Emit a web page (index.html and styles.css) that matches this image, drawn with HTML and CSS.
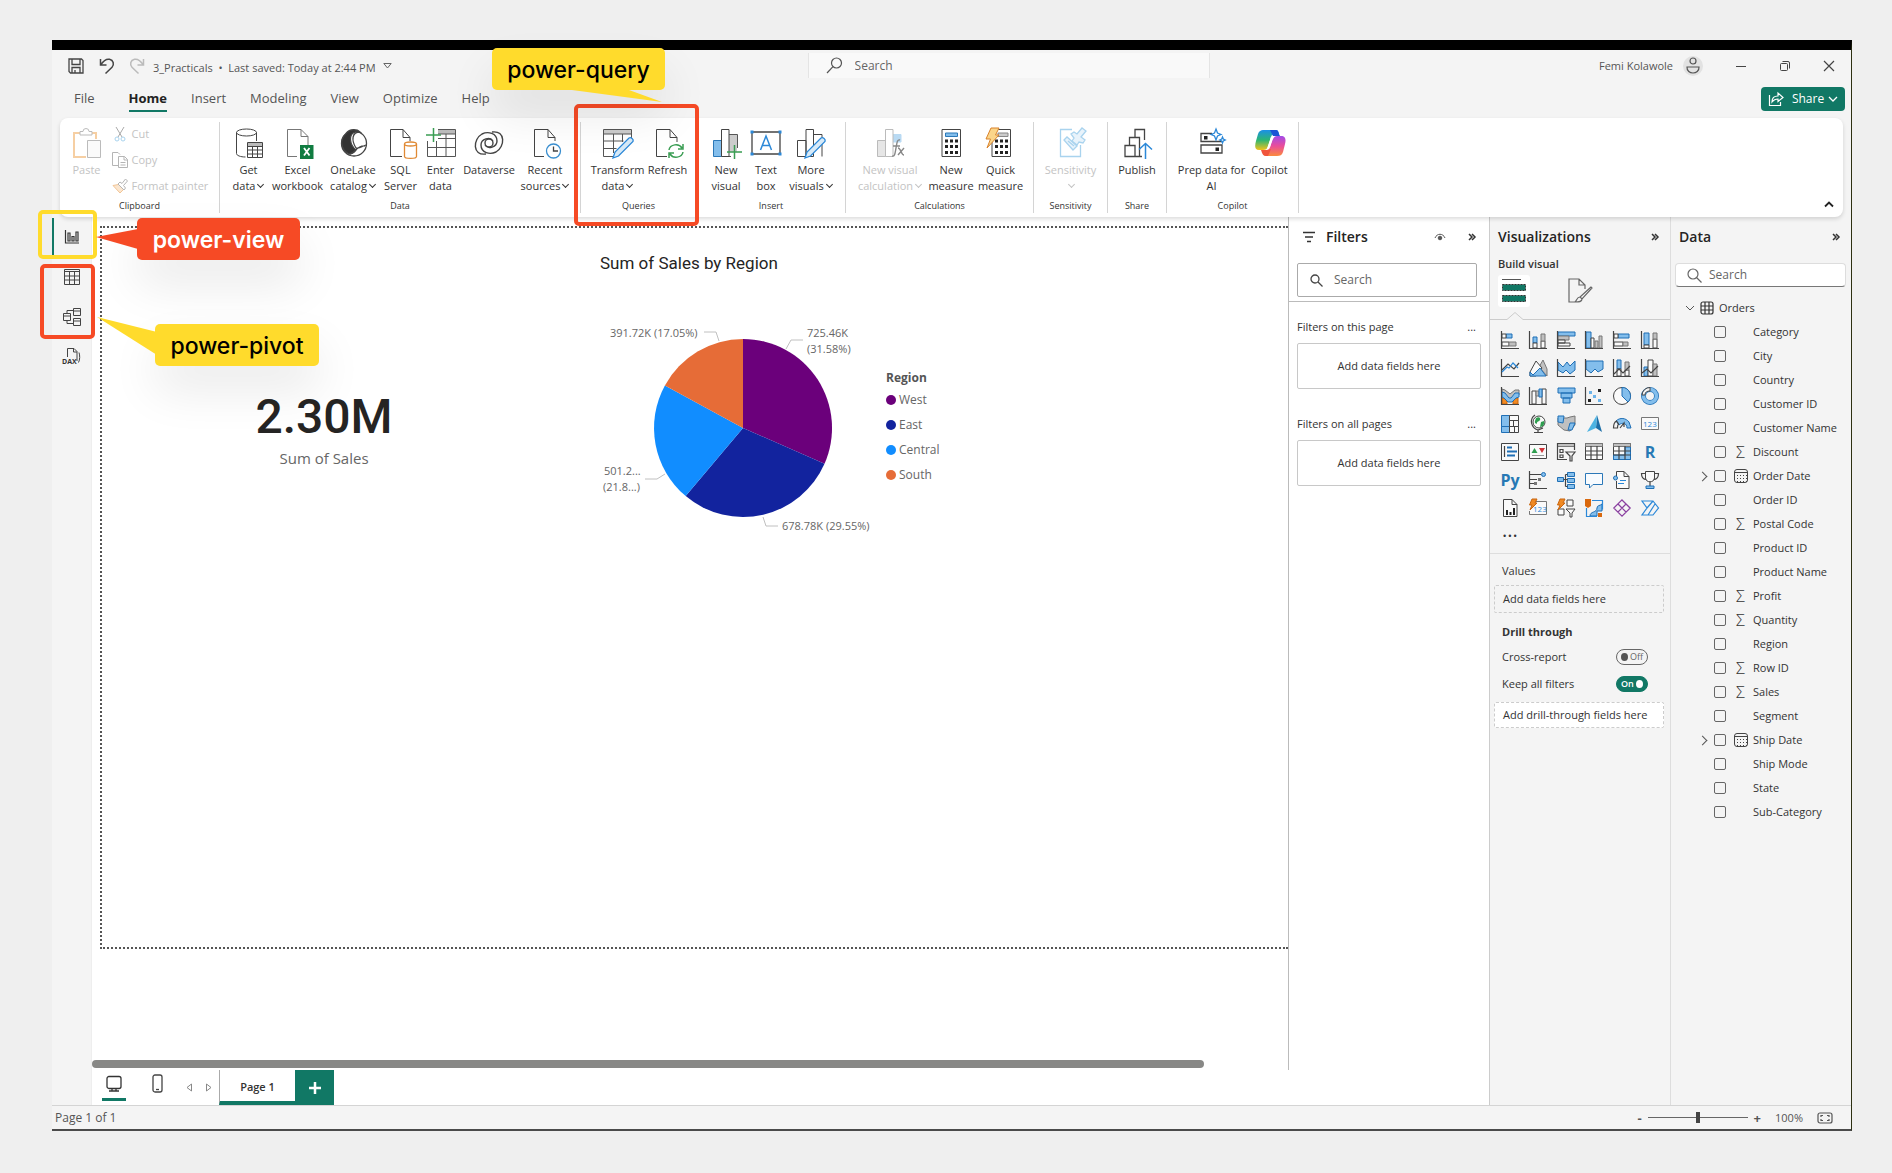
FILE: index.html
```html
<!DOCTYPE html>
<html lang="en">
<head>
<meta charset="utf-8">
<title>3_Practicals - Power BI Desktop</title>
<link rel="stylesheet" href="styles.css">
</head>
<body>
<div class="app">
  <header class="titlebar">
    <div class="quick">
      <button class="plain" aria-label="Save"><svg width="18" height="18" viewBox="0 0 18 18" fill="none" stroke="#444" stroke-width="1.3"><path d="M2 2h12.500L16 3.500V16H3.500L2 14.500zM5 2v5.500h8V2M5 16v-5.500h8V16M8 13v3"/></svg></button>
      <button class="plain" aria-label="Undo"><svg width="16" height="18" viewBox="0 0 16 18" fill="none" stroke="#444" stroke-width="1.500"><path d="M1.500 2v6h6M1.800 7.700C4 4.500 7 1.500 10.500 2.300c4 1 5 5 2.500 8L6.500 16.500"/></svg></button>
      <button class="plain" aria-label="Redo" disabled><svg width="16" height="18" viewBox="0 0 16 18" fill="none" stroke="#bbb" stroke-width="1.500"><path d="M14.500 2v6h-6M14.200 7.700C12 4.500 9 1.500 5.500 2.300c-4 1-5 5-2.500 8l6.500 6.200"/></svg></button>
      <span class="filename">3_Practicals&nbsp; •&nbsp; Last saved: Today at 2:44 PM</span>
      <svg class="caret" width="9" height="6" viewBox="0 0 9 6" fill="none" stroke="#666"><path d="M.8.500h7.400L4.500 5z"/></svg>
    </div>
    <label class="topsearch">
      <svg width="17" height="17" viewBox="0 0 17 17" fill="none" stroke="#555" stroke-width="1.200"><circle cx="10.500" cy="6" r="5"/><path d="M7 9.700 1 16"/></svg>
      <input type="text" placeholder="Search" aria-label="Search">
    </label>
    <div class="window">
      <span>Femi Kolawole</span>
      <svg class="avatar" width="20" height="20" viewBox="0 0 20 20" fill="none" stroke="#555" stroke-width="1.200"><circle cx="10" cy="10" r="10" fill="#e2e2e2" stroke="none"/><circle cx="10" cy="5" r="3"/><path d="M4 11h12c.500 8-12.500 8-12 0z"/></svg>
      <button class="plain" aria-label="Minimize"><svg width="12" height="12" viewBox="0 0 12 12" stroke="#444"><path d="M1 6.500h10"/></svg></button>
      <button class="plain" aria-label="Restore"><svg width="12" height="12" viewBox="0 0 12 12" fill="none" stroke="#444"><rect x="1.500" y="3.500" width="7" height="7" rx="1"/><path d="M3.500 1.500H9a1.500 1.500 0 0 1 1.500 1.500v5.500"/></svg></button>
      <button class="plain" aria-label="Close"><svg width="12" height="12" viewBox="0 0 12 12" stroke="#444" stroke-width="1.200"><path d="m1 1 10 10M11 1 1 11"/></svg></button>
    </div>
  </header>

  <nav class="menu">
    <button class="tab">File</button>
    <button class="tab active">Home</button>
    <button class="tab">Insert</button>
    <button class="tab">Modeling</button>
    <button class="tab">View</button>
    <button class="tab">Optimize</button>
    <button class="tab">Help</button>
    <button class="share"><svg width="16" height="16" viewBox="0 0 16 16" fill="none" stroke="#fff" stroke-width="1.200"><path d="M1.500 4v10.500h11V11M4 11c0-4 2-6 6-6V2l5 4.500-5 4V8C7 8 5.500 9 4 11z"/></svg>Share<svg width="10" height="7" viewBox="0 0 10 7" fill="none" stroke="#fff" stroke-width="1.300"><path d="m1 1 4 4 4-4"/></svg></button>
  </nav>

  <section class="ribbon">
    <div class="group clipboard">
      <div class="tools">
        <button class="tool off"><svg width="30" height="30" viewBox="0 0 30 30" fill="none"><path d="M8 5H2v24h12M20 5h4v6" stroke="#f6cfa3" stroke-width="2"/><path d="M8 7V3.500h3a3 3 0 0 1 6 0h3V7z" stroke="#bbb"/><path d="M15.500 12.500h13v17h-13z" fill="#fafafa" stroke="#bbb"/></svg>Paste</button>
        <div class="stack">
          <button class="mini"><svg width="16" height="16" viewBox="0 0 16 16" fill="none" stroke="#aaa"><path d="M4 1l6 10M12 1 6 11"/><circle cx="5" cy="13" r="2" stroke="#a9d3ee"/><circle cx="11" cy="13" r="2" stroke="#a9d3ee"/></svg>Cut</button>
          <button class="mini"><svg width="16" height="16" viewBox="0 0 16 16" fill="none" stroke="#b5b5b5"><path d="M6 13.500H.500V.500H6l2 2M6.500 4.500h6l3 3v8h-9zM12 4.500V8h3.500M8.500 10.500h5M8.500 13h5"/></svg>Copy</button>
          <button class="mini"><svg width="16" height="16" viewBox="0 0 16 16" fill="none" stroke="#b5b5b5"><path d="M1 7.500 8 15l3.500-3.500-5-5z" fill="#fbe6cf" stroke="#f2c596"/><path d="m6 6 6 6 1.500-2-2-2.500L15.500 3 13.500 1 10 5.500 8 4z"/></svg>Format painter</button>
        </div>
      </div>
      <h2>Clipboard</h2>
    </div>
    <div class="group data">
      <div class="tools">
        <button class="tool"><svg width="30" height="30" viewBox="0 0 30 30" fill="none" stroke="#444"><path d="M2.500 4.500v21c0 2 4 3.500 9 3.500M22.500 4.500V13"/><ellipse cx="12.500" cy="4.500" rx="10" ry="3.500"/><path d="M13.500 14.500h15v15h-15z" fill="#fff"/><path d="M14 15h14v3H14z" fill="#bbb" stroke="none"/><path d="M13.500 18.500h15M13.500 22h15M13.500 26h15M18.500 18.500v11M23.500 18.500v11"/></svg>Get<span>data<i class="chev"></i></span></button>
        <button class="tool"><svg width="30" height="30" viewBox="0 0 30 30" fill="none" stroke="#777"><path d="M14 28.500H4.500v-27H18l7 7V17M18 1.500v7h7" /><path d="M17 17h13.500v14H17z" fill="#107c41" stroke="none"/><path d="m21 20 5.500 7.500M26.500 20 21 27.500" stroke="#fff" stroke-width="1.800"/></svg>Excel<span>workbook</span></button>
        <button class="tool"><svg width="30" height="30" viewBox="0 0 30 30" fill="none" stroke="#444" stroke-width="1.300"><circle cx="16" cy="15.500" r="12.500"/><path d="M8 5.500C12 .500 19 1 22 4c-5-1-10 1-9.500 8 .500 5 3 8 5.500 10-2 3-5 4-7 4C3 22 1 12 8 5.500z" fill="#333"/><path d="M22 4c-8 0-9 8-4 16 3 1 7-2 10-3M12 26c5-1 7-9 15-8" /></svg>OneLake<span>catalog<i class="chev"></i></span></button>
        <button class="tool"><svg width="30" height="30" viewBox="0 0 30 30" fill="none" stroke="#444"><path d="M16 28.500H4.500v-27H17l7 8V13M17 1.500v8h7"/><path d="M18.500 16v12.500c0 2.500 12 2.500 12 0V16" fill="#fff" stroke="#e08a35" stroke-width="1.300"/><ellipse cx="24.500" cy="16" rx="6" ry="2" fill="#fff" stroke="#e08a35" stroke-width="1.300"/></svg>SQL<span>Server</span></button>
        <button class="tool"><svg width="30" height="30" viewBox="0 0 30 30" fill="none" stroke="#555"><path d="M12 2h17v4H12z" fill="#bbb" stroke="none"/><path d="M12 1.500h17.500v27h-28V13M1.500 19.500h28M12 10.500h17.500M10.500 13v15.500M20 6v22.500M12 6h17.500"/><path d="M7.500 0v14M0 7h15" stroke="#3a9d53" stroke-width="1.500"/></svg>Enter<span>data</span></button>
        <button class="tool"><svg width="30" height="30" viewBox="0 0 30 30" fill="none" stroke="#444" stroke-width="1.400"><path d="M12 26C-2 28-1 11 8 6c6-3 15-1 15 7 0 6-9 9-12 4"/><path d="M18 4c14-2 13 15 4 20-6 3-15 1-15-7 0-6 9-9 12-4"/><circle cx="15" cy="15" r="4"/></svg>Dataverse</button>
        <button class="tool"><svg width="30" height="30" viewBox="0 0 30 30" fill="none" stroke="#444"><path d="M14 28.500H4.500v-27H18l7 8V13M18 1.500v8h7"/><circle cx="23.500" cy="23" r="7" fill="#fff" stroke="#3a8fd0" stroke-width="1.300"/><path d="M23.500 18.500V23H28" stroke-width="1.300"/></svg>Recent<span>sources<i class="chev"></i></span></button>
      </div>
      <h2>Data</h2>
    </div>
    <div class="group queries">
      <div class="tools">
        <button class="tool"><svg width="30" height="30" viewBox="0 0 30 30" fill="none" stroke="#555"><path d="M1 2h27v4H1z" fill="#ccc" stroke="none"/><path d="M10 28.500H.500v-27h28V10M.500 6h28M.500 13h20M.500 20.500h13M10.500 6v19M19.500 6v8"/><path d="m10 30 2-6 14-14c2-1 5 1 4 3.500L15.500 28z" fill="#d7eaf8" stroke="#2b88d8" stroke-width="1.300"/></svg>Transform<span>data<i class="chev"></i></span></button>
        <button class="tool"><svg width="30" height="30" viewBox="0 0 30 30" fill="none" stroke="#444"><path d="M14 28.500H3.500v-27H17l7 8V14M17 1.500v8h7"/><path d="M16 22c1-6 10-7 13-2M30 16v5h-5M30 24c-1 6-10 7-13 2M16 30v-5h5" stroke="#3a9d53" stroke-width="1.500"/></svg>Refresh</button>
      </div>
      <h2>Queries</h2>
    </div>
    <div class="group insert">
      <div class="tools">
        <button class="tool"><svg width="30" height="30" viewBox="0 0 30 30" fill="none" stroke="#555"><path d="M18 6.500h8.500V20M18 28.500h2" fill="#ccc"/><path d="M18 7h8v17h-8z" fill="#ccc" stroke="none"/><path d="M2.500 12.500h8v16h-8z" fill="#83beec" stroke="#2b78b8"/><path d="M10.500 1.500H18v27h-7.500z" fill="#fff" stroke="#444"/><path d="M23.500 17v14M16 24h15" stroke="#3a9d53" stroke-width="1.500"/></svg>New<span>visual</span></button>
        <button class="tool"><svg width="32" height="30" viewBox="0 0 32 30" fill="none"><path d="M2 4h28v22H2z" stroke="#444" stroke-width="1.300"/><path d="M.500 2.500h3v3h-3zM28.500 2.500h3v3h-3zM.500 24.500h3v3h-3zM28.500 24.500h3v3h-3z" fill="#2b88d8"/><path d="m10.500 22 5.500-14 5.500 14M12.500 17.500h7" stroke="#2b88d8" stroke-width="1.500"/></svg>Text<span>box</span></button>
        <button class="tool"><svg width="30" height="30" viewBox="0 0 30 30" fill="none" stroke="#444"><path d="M1.500 12.500H10v16H1.500zM10 1.500h7.500v27H10zM17.500 6.500H26v22"/><path d="m9 30 2-6 14-14c2-1 5 1 4 3.500L14.500 28z" fill="#d7eaf8" stroke="#2b88d8" stroke-width="1.300"/></svg>More<span>visuals<i class="chev"></i></span></button>
      </div>
      <h2>Insert</h2>
    </div>
    <div class="group calc">
      <div class="tools">
        <button class="tool off"><svg width="30" height="30" viewBox="0 0 30 30" fill="none" stroke="#bbb"><path d="M18 6.500h8V14h-8z" fill="#b9daf3" stroke="#b9daf3"/><path d="M2.500 12.500h8v16h-8z" fill="#e6e6e6"/><path d="M10.500 1.500H18v27h-7.500z" fill="#fff"/><path d="M25 12c-3-1-3 3-4 8s-1 9-4 8M18 18h7M23 20c3 0 3 7 6 7M29 20l-6 7" stroke="#888" stroke-width="1.400"/></svg>New visual<span>calculation<i class="chev"></i></span></button>
        <button class="tool"><svg width="30" height="30" viewBox="0 0 30 30"><path d="M6 1.500h18.500v27H6z" fill="#fff" stroke="#444"/><path d="M9.500 5h12v3.500h-12z" fill="#83beec" stroke="#2b78b8"/><path d="M9 13h13M9 18.500h13M9 24.500h13" stroke="#222" stroke-width="3" stroke-dasharray="3 2"/></svg>New<span>measure</span></button>
        <button class="tool"><svg width="30" height="30" viewBox="0 0 30 30"><path d="M6 1.500h18.500v27H6z" fill="#fff" stroke="#444"/><path d="M12 5h10v3.500H12z" fill="#ccc" stroke="#888"/><path d="M9 13h13M9 18.500h13M9 24.500h13" stroke="#222" stroke-width="3" stroke-dasharray="3 2"/><path d="M5 0h8L9.500 7H13L1 20l3.500-9H0z" fill="#fbd58a" stroke="#d9822b"/></svg>Quick<span>measure</span></button>
      </div>
      <h2>Calculations</h2>
    </div>
    <div class="group sens">
      <div class="tools">
        <button class="tool off"><svg width="30" height="30" viewBox="0 0 30 30" fill="none" stroke="#a9d3ee" stroke-width="1.300"><path d="M16 1.500H4.500v27h20V17"/><path d="m8 12 3-3 10 9-4 4z" fill="#e8f3fb"/><path d="m12 13 6 5"/><path d="m15 6 3-2 3 2 5-6 4 3-5 6 4 3-2 3-4-1-2 3-5-4 2-3z" fill="#e8f3fb"/></svg>Sensitivity<span><i class="chev"></i></span></button>
      </div>
      <h2>Sensitivity</h2>
    </div>
    <div class="group pub">
      <div class="tools">
        <button class="tool"><svg width="30" height="30" viewBox="0 0 30 30" fill="none" stroke="#444" stroke-width="1.300"><path d="M20 28.500H3v-11h10v11M7.500 17.500v-8h10V28M13 9.500v-8h9.500V12"/><path d="M23.500 31V16M17 21.500l6.500-6 6.500 6" stroke="#2b88d8" stroke-width="1.500"/></svg>Publish</button>
      </div>
      <h2>Share</h2>
    </div>
    <div class="group copilot">
      <div class="tools">
        <button class="tool"><svg width="30" height="30" viewBox="0 0 30 30" fill="none" stroke="#444" stroke-width="1.300"><path d="M15 5.500H4v8h21M4 17h21v8H4z"/><path d="M7 8h3.500v3.500H7zM18.500 19.500H22V23h-3.500z" fill="#222" stroke="none"/><path d="M19 1l1.500 4L24 6.500 20.500 8 19 12l-1.500-4L14 6.500 17.500 5zM25.500 9l.8 2 2 1-2 1-.8 2-.8-2-2-1 2-1z" fill="#fff" stroke="#2b88d8"/></svg>Prep data for<span>AI</span></button>
        <button class="tool"><svg width="32" height="30" viewBox="0 0 32 30"><defs><linearGradient id="ca" x1="0" y1="0" x2="0" y2="1"><stop offset="0" stop-color="#1b8fe8"/><stop offset=".500" stop-color="#2bb673"/><stop offset="1" stop-color="#f3c21b"/></linearGradient><linearGradient id="cb" x1="0" y1="0" x2="0" y2="1"><stop offset="0" stop-color="#a24be8"/><stop offset=".500" stop-color="#ea4d9a"/><stop offset="1" stop-color="#fb8a3c"/></linearGradient></defs><path d="M9 2h13c2 0 2.500 2 3 4h-5c-2 0-3 2-4 6l-2 6c-1 3-2 4-5 4H5c-5 0-4-5-3-9L4 6c1-3 3-4 5-4z" fill="url(#ca)"/><path d="M16 2h6c2 0 2.500 2 3 4l1 2h-7z" fill="#1a53d6"/><path d="M23 28H12c-3 0-3-3-4-6h5c2 0 3-2 4-6l2-5c1-2 2-3 4-3h4c5 0 5 4 4 8l-2 8c-1 3-3 4-6 4z" fill="url(#cb)"/><path d="M7 22h6l4-1-3 7h-2c-3 0-4-3-5-6z" fill="#f0553c"/><path d="m17 9-4 12c2-1 3-2 4-5l2-7z" fill="#fff"/></svg>Copilot</button>
      </div>
      <h2>Copilot</h2>
    </div>
    <button class="plain collapse" aria-label="Collapse ribbon"><svg width="10" height="7" viewBox="0 0 10 7" fill="none" stroke="#222" stroke-width="1.800"><path d="m1 5.500 4-4 4 4"/></svg></button>
  </section>

  <main class="work">
    <nav class="rail">
      <button class="view current" aria-label="Report view"><svg width="16" height="16" viewBox="0 0 16 16" fill="none" stroke="#333" stroke-width="1.200"><path d="M1.500 1v13H15M4 4h2v8H4zM8 7.500h2V12H8zM12 3h2v9h-2z"/></svg></button>
      <button class="view" aria-label="Table view"><svg width="18" height="18" viewBox="0 0 18 18" fill="none" stroke="#444"><path d="M1.500 1.500h15v15h-15zM1.500 3.500h15M1.500 8h15M1.500 12h15M6.500 4v12M11.500 4v12"/></svg></button>
      <button class="view" aria-label="Model view"><svg width="20" height="20" viewBox="0 0 20 20" fill="none" stroke="#444"><path d="M1.500 6.500h7v7h-7zM1.500 9h7M11.500 1.500h7v7h-7zM11.500 4h7M11.500 11.500h7v7h-7zM11.500 14h7M5 6V3.500h6.500M5 14v2.500h6.500"/></svg></button>
      <button class="view" aria-label="DAX query view"><svg width="20" height="20" viewBox="0 0 20 20" fill="none" stroke="#444"><path d="M5.500 10V1.500H12l3 3V14M11.500 1.500V5H15M17 5.500c1 3 1 7-.500 10"/><text x="0" y="17" font-size="7" font-weight="700" fill="#333" stroke="none">DAX</text></svg></button>
    </nav>

    <div class="center">
      <div class="upper">
        <div class="canvas">
          <div class="page">
            <figure class="card"><strong>2.30M</strong><figcaption>Sum of Sales</figcaption></figure>
            <figure class="pie">
              <figcaption>Sum of Sales by Region</figcaption>
              <div class="plot">
                <svg width="286" height="240" viewBox="0 0 286 240">
                  <g transform="translate(143 127)">
                    <path d="M0 0V-89A89 89 0 0 1 81.500 35.800z" fill="#6b007b"/>
                    <path d="M0 0 81.500 35.800A89 89 0 0 1-57.300 68.100z" fill="#12239e"/>
                    <path d="M0 0-57.300 68.100A89 89 0 0 1-78.100-42.600z" fill="#118dff"/>
                    <path d="M0 0-78.100-42.600A89 89 0 0 1 0-89z" fill="#e66c37"/>
                  </g>
                  <path d="M104 31h12l3 9M186 48l5-9h12M163 216l3 9h12M65 173l-8 5H45" fill="none" stroke="#c0c0c0"/>
                  <g class="slice-labels">
                    <text x="10" y="36">391.72K (17.05%)</text>
                    <text x="207" y="36">725.46K</text><text x="207" y="52">(31.58%)</text>
                    <text x="4" y="174">501.2...</text><text x="3" y="190">(21.8...)</text>
                    <text x="182" y="229">678.78K (29.55%)</text>
                  </g>
                </svg>
                <ul class="legend">
                  <li class="head">Region</li>
                  <li><i class="west"></i>West</li>
                  <li><i class="east"></i>East</li>
                  <li><i class="central"></i>Central</li>
                  <li><i class="south"></i>South</li>
                </ul>
              </div>
            </figure>
          </div>
          <div class="scroll"><div class="thumb"></div></div>
        </div>

        <aside class="filters">
          <div class="fhead">
            <svg width="14" height="12" viewBox="0 0 14 12" stroke="#333" stroke-width="1.300"><path d="M1 1.500h12M3 6h8M5 10.500h4"/></svg>
            <h3>Filters</h3>
            <button class="plain eye" aria-label="Show filters"><svg width="12" height="8" viewBox="0 0 12 8" fill="none" stroke="#555"><path d="M1 5c2-5 8-5 10 0"/><circle cx="6" cy="5" r="1.800" fill="#555"/></svg></button>
            <button class="plain" aria-label="Collapse"><svg width="8" height="8" viewBox="0 0 8 8" fill="none" stroke="#333" stroke-width="1.500"><path d="m1 1 3 3-3 3M4 1l3 3-3 3"/></svg></button>
          </div>
          <label class="fsearch"><svg width="13" height="13" viewBox="0 0 13 13" fill="none" stroke="#444" stroke-width="1.300"><circle cx="5" cy="5" r="4"/><path d="m8 8 4.500 4.500"/></svg><input type="text" placeholder="Search" aria-label="Search filters"></label>
          <section class="fgroup"><div class="frow"><span>Filters on this page</span><button class="plain">...</button></div><button class="well">Add data fields here</button></section>
          <section class="fgroup"><div class="frow"><span>Filters on all pages</span><button class="plain">...</button></div><button class="well">Add data fields here</button></section>
        </aside>
      </div>

      <footer class="pages">
        <button class="device on" aria-label="Desktop layout"><svg width="18" height="18" viewBox="0 0 18 18" fill="none" stroke="#333" stroke-width="1.300"><rect x="2" y="1.500" width="14" height="12" rx="2"/><path d="M4 16h10M7 14v2M11 14v2"/></svg></button>
        <button class="device" aria-label="Mobile layout"><svg width="12" height="20" viewBox="0 0 12 20" fill="none" stroke="#444" stroke-width="1.300"><rect x="1" y="1" width="9" height="17" rx="2"/><path d="M4 15.500h3"/></svg></button>
        <button class="plain" aria-label="Previous page"><svg width="6" height="9" viewBox="0 0 6 9" fill="none" stroke="#888"><path d="M5.500 1v7L1 4.500z"/></svg></button>
        <button class="plain next" aria-label="Next page"><svg width="6" height="9" viewBox="0 0 6 9" fill="none" stroke="#888"><path d="M.500 1v7L5 4.500z"/></svg></button>
        <button class="pagetab">Page 1</button>
        <button class="addpage" aria-label="New page"><svg width="12" height="12" viewBox="0 0 12 12" stroke="#fff" stroke-width="2.500"><path d="M6 0v12M0 6h12"/></svg></button>
      </footer>
    </div>

    <aside class="viz">
      <div class="phead"><h3>Visualizations</h3><button class="plain" aria-label="Collapse"><svg width="8" height="8" viewBox="0 0 8 8" fill="none" stroke="#333" stroke-width="1.500"><path d="m1 1 3 3-3 3M4 1l3 3-3 3"/></svg></button></div>
      <p class="build">Build visual</p>
      <div class="modes">
        <button class="mode on" aria-label="Build visual"><svg width="26" height="26" viewBox="0 0 26 26"><path d="M1 1.500h19" stroke="#555"/><path d="M1.500 6.500h23v6h-23zM1.500 17.500h23v6h-23z" fill="#117865" stroke="#333" stroke-dasharray="2 1"/></svg></button>
        <button class="mode" aria-label="Format visual"><svg width="26" height="26" viewBox="0 0 26 26" fill="none" stroke="#666" stroke-width="1.200"><path d="M9 24H2V1h10l6 6v4M12 1v6h6M24 9 13 19l2 2L25 10zM13 19c-3 0-3 3-5 5 4 0 7 0 7-3"/></svg></button>
      </div>
      <svg class="notch" width="180" height="8" viewBox="0 0 180 8" fill="none" stroke="#ccc"><path d="M0 7.500h17l8-7 8 7h147"/></svg>
      <div class="gallery">
        <button aria-label="Stacked bar"><svg viewBox="0 0 18 18"><path class="ax" d="M.500 0v17.500H18"/><path class="b" d="M5 3h6v4H5z"/><path class="w" d="M1 3h4v4H1zM1 11h7v4H1z"/><path class="g" d="M8 11h7v4H8z"/></svg></button>
        <button aria-label="Stacked column"><svg viewBox="0 0 18 18"><path class="ax" d="M.500 0v17.500H18"/><path class="b" d="M4 6h4v6H4z"/><path class="w" d="M4 12h4v5H4zM12 10h4v7h-4z"/><path class="g" d="M12 3h4v7h-4z"/></svg></button>
        <button aria-label="Clustered bar"><svg viewBox="0 0 18 18"><path class="b" d="M1 1h17v4H1z"/><path class="g" d="M1 5h11v4H1z"/><path class="w" d="M1 9h7v3H1zM1 12h12v3H1z"/><path class="ax" d="M.500 0v17.500H18"/></svg></button>
        <button aria-label="Clustered column"><svg viewBox="0 0 18 18"><path class="b" d="M1 1h5v16H1z"/><path class="w" d="M6 7h3v10H6z"/><path class="g" d="M10 10h3v7h-3zM14 5h3v12h-3z"/><path class="ax" d="M.500 0v17.500H18"/></svg></button>
        <button aria-label="100% stacked bar"><svg viewBox="0 0 18 18"><path class="b" d="M5 3h11v4H5z"/><path class="w" d="M1 3h4v4H1zM1 11h9v4H1z"/><path class="g" d="M10 11h5v4h-5z"/><path class="ax" d="M.500 0v17.500H18"/></svg></button>
        <button aria-label="100% stacked column"><svg viewBox="0 0 18 18"><path class="b" d="M3 2h5v12H3z"/><path class="w" d="M3 14h5v3H3zM12 8h4v9h-4z"/><path class="g" d="M12 2h4v6h-4z"/><path class="ax" d="M.500 0v17.500H18"/></svg></button>

        <button aria-label="Line"><svg viewBox="0 0 18 18"><path class="ax" d="M.500 0v17.500H18M1 11l6-6 6 5 5-6"/><path class="bl" d="m1 13 5-5 2 1 4-5 5 5"/></svg></button>
        <button aria-label="Area"><svg viewBox="0 0 18 18"><path class="g" d="M10 8l4-7 4 9v7z"/><path class="w" d="m1 13 6-11 6 7-6 8H1z"/><path class="b" d="m1 13 3 3 7-7 6 8H1z"/></svg></button>
        <button aria-label="Stacked area"><svg viewBox="0 0 18 18"><path class="b" d="m1 3 5 5 4-5 3 4 5-5v9l-5 4-4-4-3 3-5-3z"/><path class="ax" d="M.500 0v17.500H18"/></svg></button>
        <button aria-label="100% stacked area"><svg viewBox="0 0 18 18"><path class="b" d="M1 2h17v8l-5 3-3-3-4 4-5-4z"/><path class="ax" d="M.500 0v17.500H18"/></svg></button>
        <button aria-label="Line and stacked column"><svg viewBox="0 0 18 18"><path class="b" d="M4 1h4v9H4z"/><path class="w" d="M4 10h4v7H4zM12 11h4v6h-4z"/><path class="g" d="M12 3h4v8h-4z"/><path class="ax" d="M.500 0v17.500H18M1 15l5-5 4 4 7-7"/></svg></button>
        <button aria-label="Line and clustered column"><svg viewBox="0 0 18 18"><path class="b" d="M3 8h4v9H3z"/><path class="w" d="M7 1h5v16H7z"/><path class="g" d="M12 5h4v12h-4z"/><path class="ax" d="M.500 0v17.500H18M1 14l5-4 4 4 7-7"/></svg></button>

        <button aria-label="Ribbon"><svg viewBox="0 0 18 18"><path class="o" d="M1 11h5v6H1zM12 11h5v6h-5z"/><path class="g" d="m1 2 3 1 5 4 5-4h4v5l-5 1-4 3-4-3-4-1z"/><path class="b" d="m1 5 3 1 4 5h2l4-5h4v4l-3 1-4 4H7l-4-4-2-1z"/><path class="ax" d="M.500 0v17.500H18"/></svg></button>
        <button aria-label="Waterfall"><svg viewBox="0 0 18 18"><path class="w" d="M3 4h4v13H3zM13 2h4v15h-4z"/><path class="g" d="M7 4h3v5H7z"/><path class="b" d="M10 2h3v8h-3z"/><path class="ax" d="M.500 0v17.500H18"/></svg></button>
        <button aria-label="Funnel"><svg viewBox="0 0 18 18"><path class="b" d="M1 1h17v5H1zM4 6h11v5H4zM6 11h7v5H6z"/></svg></button>
        <button aria-label="Scatter"><svg viewBox="0 0 18 18"><path class="ax" d="M.500 0v17.500H18"/><path d="M13 2h3v3h-3zM3 12h3v3H3z" fill="#222"/><path d="M4 4h3v3H4zM8 8h3v3H8zM13 12h3v3h-3z" fill="#6cb4ea"/></svg></button>
        <button aria-label="Pie"><svg viewBox="0 0 18 18"><circle class="w" cx="9" cy="9" r="8.500"/><path class="b" d="M9 .500a8.500 8.500 0 0 1 6 14.500L9 9z"/></svg></button>
        <button aria-label="Donut"><svg viewBox="0 0 18 18"><circle cx="9" cy="9" r="6.500" fill="none" stroke="#1f6fb5" stroke-width="5"/><circle cx="9" cy="9" r="6.500" fill="none" stroke="#83beec" stroke-width="3.500"/><path d="M9 .500A8 8 0 0 0 1 8h3c0-3 2-4 5-4z" fill="#f4f4f4" stroke="#444"/></svg></button>

        <button aria-label="Treemap"><svg viewBox="0 0 18 18"><path class="b" d="M.500.500h8v11h-8zM.500 11.500h8v6h-8z"/><path class="w" d="M8.500.500h9v5h-9zM8.500 5.500h4v6h-4zM12.500 5.500h5v6h-5zM8.500 11.500h5v6h-5zM13.500 11.500h4v6h-4z"/></svg></button>
        <button aria-label="Map"><svg viewBox="0 0 18 18"><circle class="w" cx="10" cy="7" r="6"/><path d="M7 3c3-2 5 0 4 2s-3 1-3 3-3 0-2-2zM12 7l3-1c1 3-1 6-4 6z" fill="#2e9e4f"/><path class="ax" d="M6 0C0 4 2 13 9 15l5-2M9 15v2.500M5 17.500h9"/></svg></button>
        <button aria-label="Filled map"><svg viewBox="0 0 18 18"><path class="g" d="M1 3h9l3-1 5-1v9l-5 6-6-1-6-5z"/><path class="b" d="M1 1h6l-1 7-5-1zM13 8h5l-3 7h-4z"/></svg></button>
        <button aria-label="Azure map"><svg viewBox="0 0 18 18"><path d="m12 0 5 17-6-4z" fill="#1d6fa8"/><path d="M12 0 2 17l9-4z" fill="#4db3e2"/></svg></button>
        <button aria-label="Gauge"><svg viewBox="0 0 18 18"><path class="b" d="M3 6c4-4 10-3 13 1l2 6h-4c0-5-5-6-8-3z"/><path class="ax" d="M.500 13c0-3 1-6 3-7l2 3c-1 1-1 2-1 4zM7 13l4-5v4"/></svg></button>
        <button aria-label="Card"><svg viewBox="0 0 18 18"><path class="ln" d="M.500 2.500h17v12H.500z"/><text x="2" y="12">123</text></svg></button>

        <button aria-label="Multi-row card"><svg viewBox="0 0 18 18"><path class="w" d="M.500.500h17v17H.500z"/><path class="ax" d="M3.500 3v11"/><path d="M6 4.500h5M6 8.500h10M6 12.500h8" stroke="#1f6fb5" stroke-width="1.800"/></svg></button>
        <button aria-label="KPI"><svg viewBox="0 0 18 18"><path class="w" d="M.500 1.500h17v14H.500z"/><path d="m2.500 10 3-5 3 5z" fill="#2e9e4f"/><path d="m10 5h6l-3 5z" fill="#d13438"/><path d="M3 12.500h12" stroke="#999"/></svg></button>
        <button aria-label="Slicer"><svg viewBox="0 0 18 18"><path class="g" d="M.500.500h17v3H.500z"/><path class="ax" d="M10 16.500H.500V.500h17V7M3 6.500h3v3H3zM3 12h3v2.500H3zM9 9h9l-3 4v5h-2v-5z"/></svg></button>
        <button aria-label="Table"><svg viewBox="0 0 18 18"><path class="w" d="M.500.500h17v16H.500z"/><path class="g" d="M.500.500h17v3H.500z"/><path class="ax" d="M.500 8h17M.500 12h17M6 3v13.500M12 3v13.500"/></svg></button>
        <button aria-label="Matrix"><svg viewBox="0 0 18 18"><path class="w" d="M.500.500h17v16H.500z"/><path class="b" d="M12 4h5.500v12.500H.500V12H12z"/><path class="g" d="M.500.500h17v3H.500z"/><path class="ax" d="M.500 8h17M.500 12h17M6 3v13.500M12 3v13.500"/></svg></button>
        <button class="code">R</button>

        <button class="code">Py</button>
        <button aria-label="Key influencers"><svg viewBox="0 0 18 18"><path class="ax" d="M.500 0v17.500H18M1 3.500h11M1 8.500h7M1 12.500h4"/><circle class="b" cx="14.500" cy="3.500" r="2"/><path d="M9 7h3v3H9zM5 11h3v3H5z" fill="#777"/></svg></button>
        <button aria-label="Decomposition tree"><svg viewBox="0 0 18 18"><path class="b" d="M.500 6.500h6v4h-6zM10.500 1.500h7v4h-7zM10.500 7.500h7v4h-7zM10.500 13.500h7v4h-7z"/><path class="ax" d="M6.500 8.500h4M8.500 3.500v12M8.500 3.500h2M8.500 15.500h2"/></svg></button>
        <button aria-label="Q&amp;A"><svg viewBox="0 0 18 18"><path d="M.500 2.500h17v11H8L4.500 17v-3.500h-4z" fill="#f8fbfe" stroke="#2b78b8"/></svg></button>
        <button aria-label="Narrative"><svg viewBox="0 0 18 18"><path class="w" d="M3.500 5V.500H11l5 5v12H3.500V10M11 .500v5h5"/><circle class="b" cx="2.500" cy="7" r="2"/><path class="bl" d="M7 9.500h6M5 12.500h6"/></svg></button>
        <button aria-label="Goals"><svg viewBox="0 0 18 18"><path class="w" d="M4.500.500h9V7c0 5-9 5-9 0z"/><path class="ax" d="M4 2.500H.500c0 4 1 6 5 6M14 2.500h3.500c0 4-1 6-5 6M9 11v4"/><path class="b" d="M5 15h8v2.500H5z"/></svg></button>

        <button aria-label="Paginated report"><svg viewBox="0 0 18 18"><path class="w" d="M2.500.500H11l5 5v12H2.500zM11 .500v5h5"/><path d="M5 11h2v5H5zM8.500 13h2v3h-2zM12 9h2v7h-2z" fill="#222"/></svg></button>
        <button aria-label="Card (new)"><svg viewBox="0 0 18 18"><path class="ln" d="M5 2.500h12.500v13H.500V12"/><text x="4" y="13">123</text><path class="o" d="M3 0h5L6 4h2L1 11l2-5H.500z"/></svg></button>
        <button aria-label="Slicer (new)"><svg viewBox="0 0 18 18"><path class="w" d="M10 1h6v6h-6zM1 10h6v6H1z"/><path class="w" d="M9 10h9l-3 4v4h-2v-4z"/><path class="o" d="M3 0h5L6 4h2L1 11l2-5H.500z"/></svg></button>
        <button aria-label="ArcGIS"><svg viewBox="0 0 18 18"><path class="b" d="M17 5v7h-5v5H5c0-5 7-3 7-8 0-3 3-2 5-4z"/><path class="bl" d="M7 1.500h10.500v9M1.500 9v8.500H12"/><path d="M0 0h6v7l-3 2-3-2zM13 14h4v4h-4z" fill="#d9690f"/></svg></button>
        <button aria-label="Power Apps"><svg viewBox="0 0 18 18" fill="none" stroke="#8a3fa0" stroke-width="1.200"><path d="m9 .800 8.200 8.200L9 17.200.800 9zM9 1l4 4-8 8M5 5l8 8M9 9l4-4 4 4M9 9l-4-4"/></svg></button>
        <button aria-label="Power Automate"><svg viewBox="0 0 18 18" fill="none" stroke="#2b88d8" stroke-width="1.200"><path d="M1 2h11l5.500 7-5.500 7H1l5-7zM6 9l6-7M7 16l7-11"/></svg></button>
        <button class="more" aria-label="More visuals">···</button>
      </div>
      <div class="wells">
        <p>Values</p>
        <button class="drop">Add data fields here</button>
        <h4>Drill through</h4>
        <label class="switch"><span>Cross-report</span><input type="checkbox"><b class="sw">Off</b></label>
        <label class="switch"><span>Keep all filters</span><input type="checkbox" checked><b class="sw">On</b></label>
        <button class="drop white">Add drill-through fields here</button>
      </div>
    </aside>

    <aside class="fields">
      <div class="phead"><h3>Data</h3><button class="plain" aria-label="Collapse"><svg width="8" height="8" viewBox="0 0 8 8" fill="none" stroke="#333" stroke-width="1.500"><path d="m1 1 3 3-3 3M4 1l3 3-3 3"/></svg></button></div>
      <label class="dsearch"><svg width="15" height="15" viewBox="0 0 15 15" fill="none" stroke="#666" stroke-width="1.200"><circle cx="6" cy="6" r="5"/><path d="m9.500 9.500 5 5"/></svg><input type="text" placeholder="Search" aria-label="Search fields"></label>
      <div class="orders"><svg width="10" height="6" viewBox="0 0 10 6" fill="none" stroke="#555"><path d="m1 1 4 4 4-4"/></svg><svg width="14" height="14" viewBox="0 0 14 14" fill="none" stroke="#333" stroke-width="1.200"><rect x="1" y="1" width="12" height="12" rx="2"/><path d="M1 5h12M1 9h12M5 1v12M9 1v12"/></svg>Orders</div>
      <ul class="tree">
        <li><label><input type="checkbox"><s></s>Category</label></li>
        <li><label><input type="checkbox"><s></s>City</label></li>
        <li><label><input type="checkbox"><s></s>Country</label></li>
        <li><label><input type="checkbox"><s></s>Customer ID</label></li>
        <li><label><input type="checkbox"><s></s>Customer Name</label></li>
        <li><label><input type="checkbox"><s class="sum"></s>Discount</label></li>
        <li class="exp"><label><input type="checkbox"><s class="date"></s>Order Date</label></li>
        <li><label><input type="checkbox"><s></s>Order ID</label></li>
        <li><label><input type="checkbox"><s class="sum"></s>Postal Code</label></li>
        <li><label><input type="checkbox"><s></s>Product ID</label></li>
        <li><label><input type="checkbox"><s></s>Product Name</label></li>
        <li><label><input type="checkbox"><s class="sum"></s>Profit</label></li>
        <li><label><input type="checkbox"><s class="sum"></s>Quantity</label></li>
        <li><label><input type="checkbox"><s></s>Region</label></li>
        <li><label><input type="checkbox"><s class="sum"></s>Row ID</label></li>
        <li><label><input type="checkbox"><s class="sum"></s>Sales</label></li>
        <li><label><input type="checkbox"><s></s>Segment</label></li>
        <li class="exp"><label><input type="checkbox"><s class="date"></s>Ship Date</label></li>
        <li><label><input type="checkbox"><s></s>Ship Mode</label></li>
        <li><label><input type="checkbox"><s></s>State</label></li>
        <li><label><input type="checkbox"><s></s>Sub-Category</label></li>
      </ul>
    </aside>
  </main>

  <footer class="status">
    <span class="count">Page 1 of 1</span>
    <button class="plain step">-</button>
    <input class="zoom" type="range" aria-label="Zoom">
    <button class="plain step">+</button>
    <span class="pct">100%</span>
    <button class="plain" aria-label="Fit to page"><svg width="16" height="12" viewBox="0 0 16 12" fill="none" stroke="#555" stroke-width="1.200"><rect x="1" y="1" width="14" height="10" rx="2"/><path d="M4 5V3.500h2M10 3.500h2V5M12 7v1.500h-2M6 8.500H4V7"/></svg></button>
  </footer>

  <div class="mark mark-query"></div>
  <div class="mark mark-report"></div>
  <div class="mark mark-model"></div>
  <div class="callout call-query"><svg width="92" height="13" viewBox="0 0 92 13"><path d="M0 0h57l33 12z" fill="#ffdb2c"/></svg>power-query</div>
  <div class="callout call-view"><svg width="42" height="20" viewBox="0 0 42 20"><path d="M42 0v20L0 8z" fill="#f64a25"/></svg>power-view</div>
  <div class="callout call-pivot"><svg width="60" height="40" viewBox="0 0 60 40"><path d="M60 15v23L0 0z" fill="#ffdb2c"/></svg>power-pivot</div>
</div>
</body>
</html>
```
FILE: styles.css
```css
* { box-sizing: border-box; }
body { margin: 0; min-height: 100vh; display: flex; padding: 40px 40px 42px 52px; background: #efefef; color: #333; font: 11px/16px "Open Sans", "Noto Sans", sans-serif; }
button, input { font: inherit; color: inherit; margin: 0; }
button { padding: 0; border: 0; background: none; }
h2, h3, h4, p, ul, figure { margin: 0; padding: 0; }
ul { list-style: none; }
svg { display: block; flex: none; overflow: visible; }
input[type="text"] { border: 0; padding: 0; background: none; outline: 0; min-width: 0; flex: 1; }
::placeholder { color: #666; opacity: 1; }
.plain { display: flex; align-items: center; justify-content: center; }

.app { position: relative; flex: 1; min-width: 0; display: flex; flex-direction: column; background: #f4f4f4; border-top: 10px solid #000; border-right: 1px solid #2d3012; border-bottom: 2px solid #4a4a4a; }

/* Title bar and menu */
.titlebar { display: grid; grid-template-columns: 42% 402px 1fr; height: 32px; flex: none; color: #555; }
.quick { display: flex; align-items: center; gap: 14px; padding-left: 15px; }
.filename { margin: 4px 0 0 -6px; color: #555; }
.caret { margin-left: -7px; }
.topsearch { display: flex; align-items: center; gap: 12px; height: 25px; margin-top: 3px; padding: 0 17px; background: #f9f9f9; border-left: 1px solid #e4e4e4; border-right: 1px solid #e4e4e4; font-size: 12px; }
.window { display: flex; align-items: center; justify-content: flex-end; gap: 32px; padding-right: 16px; }
.avatar { margin-left: -22px; }
.menu { display: flex; align-items: center; gap: 24px; height: 36px; flex: none; padding: 0 6px 2px 22px; font-size: 13px; color: #555; }
.tab { height: 26px; border-bottom: 2px solid transparent; }
.tab:first-child { margin-right: 10px; }
.active { font-weight: 700; color: #222; border-bottom-color: #117865; }
.share { display: flex; align-items: center; justify-content: center; gap: 8px; width: 84px; height: 24px; margin-left: auto; border-radius: 4px; background: #117865; color: #fff; font-size: 12px; }
.share svg:last-child { margin-left: -4px; }

/* Ribbon */
.ribbon { position: relative; z-index: 1; display: flex; flex: none; height: 99px; margin: 0 8px; background: #fff; border-radius: 8px; box-shadow: 0 2px 4px rgba(0, 0, 0, .14); }
.group { position: relative; display: flex; flex-direction: column; justify-content: space-between; margin: 4px 0; padding-top: 6px; border-right: 1px solid #d4d4d4; }
.group h2 { font-size: 9px; line-height: 14px; font-weight: 400; text-align: center; color: #333; }
.tools { display: grid; justify-content: center; }
.tool { display: flex; flex-direction: column; align-items: center; white-space: nowrap; }
.tool svg { margin-bottom: 4px; }
.off { color: #c3c3c3; }
.chev { display: inline-block; width: 5px; height: 5px; margin: 0 1px 3px 3px; border: solid; border-width: 0 1px 1px 0; transform: rotate(45deg); }
.clipboard { width: 160px; }
.clipboard .tools { grid-template-columns: 38px 106px; }
.clipboard .stack { display: flex; flex-direction: column; gap: 10px; margin-top: -2px; padding-left: 6px; }
.mini { display: flex; align-items: center; gap: 4px; color: #c3c3c3; white-space: nowrap; }
.data { width: 361px; }
.data .tools { grid-template-columns: 42px 56px 55px 40px 40px 57px 55px; }
.queries { width: 116px; }
.queries .tools { grid-template-columns: 58px 42px; }
.insert { width: 149px; }
.insert .tools { grid-template-columns: 40px 40px 50px; }
.calc { width: 188px; }
.calc .tools { grid-template-columns: 69px 53px 46px; }
.sens { width: 74px; }
.pub { width: 59px; }
.copilot { width: 132px; }
.copilot .tools { grid-template-columns: 74px 42px; }
.collapse { margin: auto 9px 9px auto; }

/* Work area */
.work { display: flex; flex: 1; min-height: 0; }
.rail { width: 40px; display: flex; flex-direction: column; gap: 2px; padding: 1px 2px 0 0; border-right: 1px solid #eee; }
.view { display: flex; align-items: center; justify-content: center; height: 38px; border-left: 2px solid transparent; }
.current { border-left-color: #117865; }
.center { flex: 1; min-width: 0; display: flex; flex-direction: column; background: #fff; }
.upper { flex: 1; display: flex; }
.canvas { flex: 1; min-width: 0; display: flex; flex-direction: column; padding-top: 9px; }
.page { display: grid; grid-template-columns: 448px 1fr; min-height: 723px; align-content: start; margin-left: 8px; border: 2px dotted #555; border-right: 0; }
.card { display: flex; flex-direction: column; align-items: center; padding: 160px 4px 0 0; }
.card strong { font: 500 48px/58px Roboto, sans-serif; color: #252423; }
.card figcaption { font-size: 15px; line-height: 24px; color: #666; }
.pie { padding: 25px 0 0 50px; }
.pie figcaption { font: 17px/20px Roboto, sans-serif; color: #252423; }
.plot { display: flex; margin-top: 28px; }
.slice-labels text { font-size: 11px; fill: #666; }
.legend { padding-top: 67px; font-size: 12px; color: #666; }
.legend li { display: flex; align-items: center; gap: 3px; height: 25px; }
.legend .head { height: 19px; font-weight: 700; color: #555; }
.legend i { width: 10px; height: 10px; border-radius: 50%; }
.west { background: #6b007b; }
.east { background: #12239e; }
.central { background: #118dff; }
.south { background: #e66c37; }
.scroll { margin-top: auto; padding-bottom: 2px; }
.thumb { width: 93%; height: 8px; border-radius: 4px; background: #888886; }

.filters { width: 201px; border-left: 1px solid #bbb; }
.fhead { display: flex; align-items: center; height: 40px; padding: 0 13px; }
.fhead h3 { flex: 1; margin-left: 10px; font-size: 14px; font-weight: 600; color: #252423; }
.eye { margin-right: 22px; }
.fsearch { display: flex; align-items: center; gap: 11px; height: 34px; margin: 6px 12px 4px 8px; padding: 0 12px; border: 1px solid #aaa; border-radius: 2px; font-size: 12px; }
.fgroup { padding: 17px 8px 4px; }
.fsearch + .fgroup { border-top: 1px solid #bbb; }
.frow { display: flex; justify-content: space-between; padding-right: 5px; margin-bottom: 8px; }
.well { width: 100%; height: 46px; border: 1px solid #c8c8c8; border-radius: 2px; }
.fgroup + .fgroup { padding-top: 23px; }

.pages { display: flex; height: 35px; padding-left: 10px; }
.device { display: flex; align-items: center; justify-content: center; width: 24px; margin-right: 20px; border-bottom: 3px solid transparent; height: 31px; }
.device.on { border-bottom-color: #117865; }
.device + .plain { margin-left: -4px; }
.next { margin: 0 7px 0 14px; }
.pagetab { width: 76px; padding-top: 3px; border-left: 1px solid #aaa; border-bottom: 4px solid #117865; font-weight: 600; }
.addpage { display: flex; align-items: center; justify-content: center; width: 39px; background: #117865; }

/* Visualizations */
.viz { width: 181px; border-left: 1px solid #ccc; }
.phead { display: flex; align-items: center; justify-content: space-between; height: 40px; padding: 0 11px 0 8px; }
.phead h3 { font-size: 14px; font-weight: 600; color: #252423; }
.build { padding-left: 8px; margin-top: -2px; font-weight: 600; line-height: 18px; }
.modes { display: flex; gap: 34px; padding: 2px 8px 5px; }
.mode { display: flex; align-items: center; justify-content: center; width: 32px; height: 32px; }
.mode.on { background: #fff; border-radius: 3px; }
.gallery { display: grid; grid-template-columns: repeat(6, 28px); grid-auto-rows: 28px; padding: 6px 6px 3px; border-bottom: 1px solid #ddd; }
.gallery button { display: flex; align-items: center; justify-content: center; }
.gallery svg { width: 18px; height: 18px; }
.gallery .code { font-size: 16px; font-weight: 700; color: #2779b5; }
.gallery .more { font-size: 20px; line-height: 16px; }
.gallery text { font-size: 8px; fill: #2b88d8; }
.ax { fill: none; stroke: #444; stroke-width: 1.2; }
.b { fill: #83beec; stroke: #1f6fb5; }
.g { fill: #c0c0c0; stroke: #777; }
.w { fill: #fafafa; stroke: #444; }
.o { fill: #f08a24; stroke: #c8650f; }
.bl { fill: none; stroke: #2b88d8; stroke-width: 1.2; }
.ln { fill: #fafafa; stroke: #777; }
.wells { padding: 9px 6px 0 4px; }
.wells p, .wells h4 { padding-left: 8px; }
.wells h4 { margin: 11px 0 3px; font-size: 11px; font-weight: 700; }
.drop { display: block; width: 100%; height: 28px; margin-top: 6px; padding: 0 8px; text-align: left; border: 1px dashed #ccc; border-radius: 2px; white-space: nowrap; }
.white { background: #fff; height: 26px; margin-top: 5px; }
.switch { display: flex; justify-content: space-between; align-items: center; height: 27px; padding: 0 16px 0 8px; }
.switch input { position: absolute; opacity: 0; }
.sw { display: flex; align-items: center; gap: 2px; width: 32px; height: 16px; padding: 0 4px; border: 1px solid #666; border-radius: 8px; font-size: 9px; font-weight: 400; color: #666; }
.sw::before { content: ""; width: 8px; height: 8px; border-radius: 50%; background: #555; }
.switch input:checked + .sw { flex-direction: row-reverse; border-color: #117865; background: #117865; color: #fff; font-weight: 600; }
.switch input:checked + .sw::before { background: #fff; }

/* Data */
.fields { width: 181px; border-left: 1px solid #ddd; }
.dsearch { display: flex; align-items: center; gap: 7px; height: 24px; margin: 6px 5px 0 4px; padding: 0 11px; background: #fff; border: 1px solid #ddd; border-bottom-color: #777; border-radius: 4px; font-size: 12px; }
.orders { display: flex; align-items: center; gap: 5px; height: 24px; margin-top: 9px; padding-left: 14px; }
.tree li { position: relative; height: 24px; padding-left: 43px; }
.tree label { display: flex; align-items: center; height: 24px; white-space: nowrap; }
.tree input { appearance: none; width: 12px; height: 12px; border: 1px solid #666; border-radius: 2px; }
.tree s { display: flex; align-items: center; justify-content: center; width: 27px; text-decoration: none; }
.sum::before { content: "Σ"; font: 300 16px/16px "Open Sans", sans-serif; margin-left: 2px; }
.date::before { content: ""; width: 12px; height: 12px; margin-left: 2px; border: 1px solid #444; border-radius: 3px; background: linear-gradient(#444, #444) 0 2px / 100% 1px no-repeat, radial-gradient(#444 1px, transparent 1px) 1px 4px / 3px 3px; }
.exp::before { content: ""; position: absolute; left: 28px; top: 9px; width: 6px; height: 6px; border: solid #555; border-width: 1px 1px 0 0; transform: rotate(45deg); }

.status { display: flex; align-items: center; height: 24px; flex: none; padding: 0 18px 0 3px; border-top: 1px solid #d4d4d4; color: #555; }
.count { margin-right: auto; font-size: 12px; }
.zoom { appearance: none; width: 100px; height: 1px; margin: 0 6px; background: #666; }
.zoom::-webkit-slider-thumb { appearance: none; width: 4px; height: 11px; background: #444; }
.step { font-weight: 700; font-size: 13px; }
.pct { margin: 0 14px; }

/* Annotations laid over the window */
.mark { position: absolute; z-index: 2; border: 4px solid #f64a25; border-radius: 5px; }
.mark-query { left: 522px; top: 54px; width: 125px; height: 122px; }
.mark-report { left: -14px; top: 160px; width: 59px; height: 49px; border-color: #ffdb2c; }
.mark-model { left: -12px; top: 214px; width: 55px; height: 75px; }
.callout { position: absolute; z-index: 3; height: 42px; border-radius: 5px; text-align: center; font: 500 23px/44px Inter, sans-serif; color: #000; background: #ffdb2c; box-shadow: 0 24px 48px rgba(0, 0, 0, .09); }
.callout svg { position: absolute; }
.call-query { left: 440px; top: -2px; width: 173px; }
.call-query svg { left: 80px; top: 42px; }
.call-view { left: 85px; top: 168px; width: 163px; background: #f64a25; color: #fff; font-weight: 600; }
.call-view svg { left: -41px; top: 11px; }
.call-pivot { left: 103px; top: 274px; width: 164px; }
.call-pivot svg { left: -58px; top: -7px; }
```
